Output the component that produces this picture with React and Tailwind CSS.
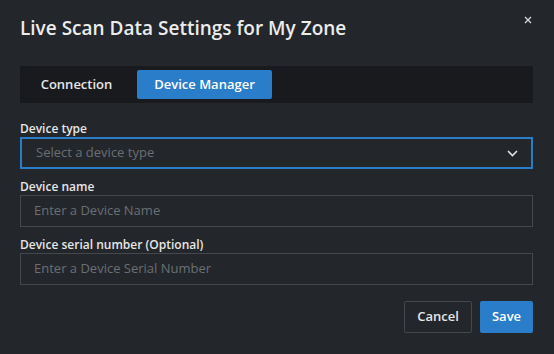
import React from "react";

function Field({ label, placeholder }) {
  return (
    <div className="flex flex-col">
      <div className="h-4 text-[12px] leading-4 font-semibold text-[#e6e6e6]">{label}</div>
      <div className="h-[32px] border border-[#44484d] flex items-center px-[13px] text-[13px] text-[#6b6f74]">
        {placeholder}
      </div>
    </div>
  );
}

export default function App() {
  return (
    <div
      className="w-[554px] h-[354px] bg-[#23262a] relative pl-5 pr-[21px] flex flex-col"
      style={{ fontFamily: '"Open Sans", "Noto Sans", sans-serif' }}
    >
      <button className="absolute right-[20px] top-[14px] w-3 h-3 flex items-center justify-center">
        <svg width="8" height="8" viewBox="0 0 8 8">
          <path d="M1 1 L7 7 M7 1 L1 7" stroke="#d8d8d8" strokeWidth="1.3" />
        </svg>
      </button>
      <div className="pt-[14px] h-[42px] text-[19px] leading-[28px] font-semibold text-[#ececec]">
        Live Scan Data Settings for My Zone
      </div>
      <div className="mt-[24px] h-[37px] bg-[#181a1d] flex items-center gap-1">
        <div className="h-[29px] w-[113px] flex items-center justify-center text-[13px] font-semibold text-[#e6e6e6]">
          Connection
        </div>
        <div className="h-[29px] w-[135px] rounded-[2px] bg-[#2a7dc9] flex items-center justify-center text-[13px] font-semibold text-white">
          Device Manager
        </div>
      </div>
      <div className="mt-[18px] flex flex-col">
        <div className="h-4 text-[12px] leading-4 font-semibold text-[#e6e6e6]">Device type</div>
        <div className="h-[32px] border-2 border-[#2a7dc9] flex items-center justify-between pl-[14px] pr-[13px] text-[13px] text-[#6b6f74]">
          <span>Select a device type</span>
          <svg width="11" height="7" viewBox="0 0 11 7">
            <path d="M1 1 L5.5 5.5 L10 1" stroke="#e0e0e0" strokeWidth="1.6" fill="none" />
          </svg>
        </div>
      </div>
      <div className="mt-[10px]">
        <Field label="Device name" placeholder="Enter a Device Name" />
      </div>
      <div className="mt-[10px]">
        <Field label="Device serial number (Optional)" placeholder="Enter a Device Serial Number" />
      </div>
      <div className="mt-[16px] flex justify-end gap-2">
        <button className="h-[32px] w-[68px] border border-[#44484d] rounded-[2px] text-[13px] font-semibold text-[#e6e6e6]">
          Cancel
        </button>
        <button className="h-[32px] w-[53px] rounded-[2px] bg-[#2a7dc9] text-[13px] font-semibold text-white">
          Save
        </button>
      </div>
    </div>
  );
}
